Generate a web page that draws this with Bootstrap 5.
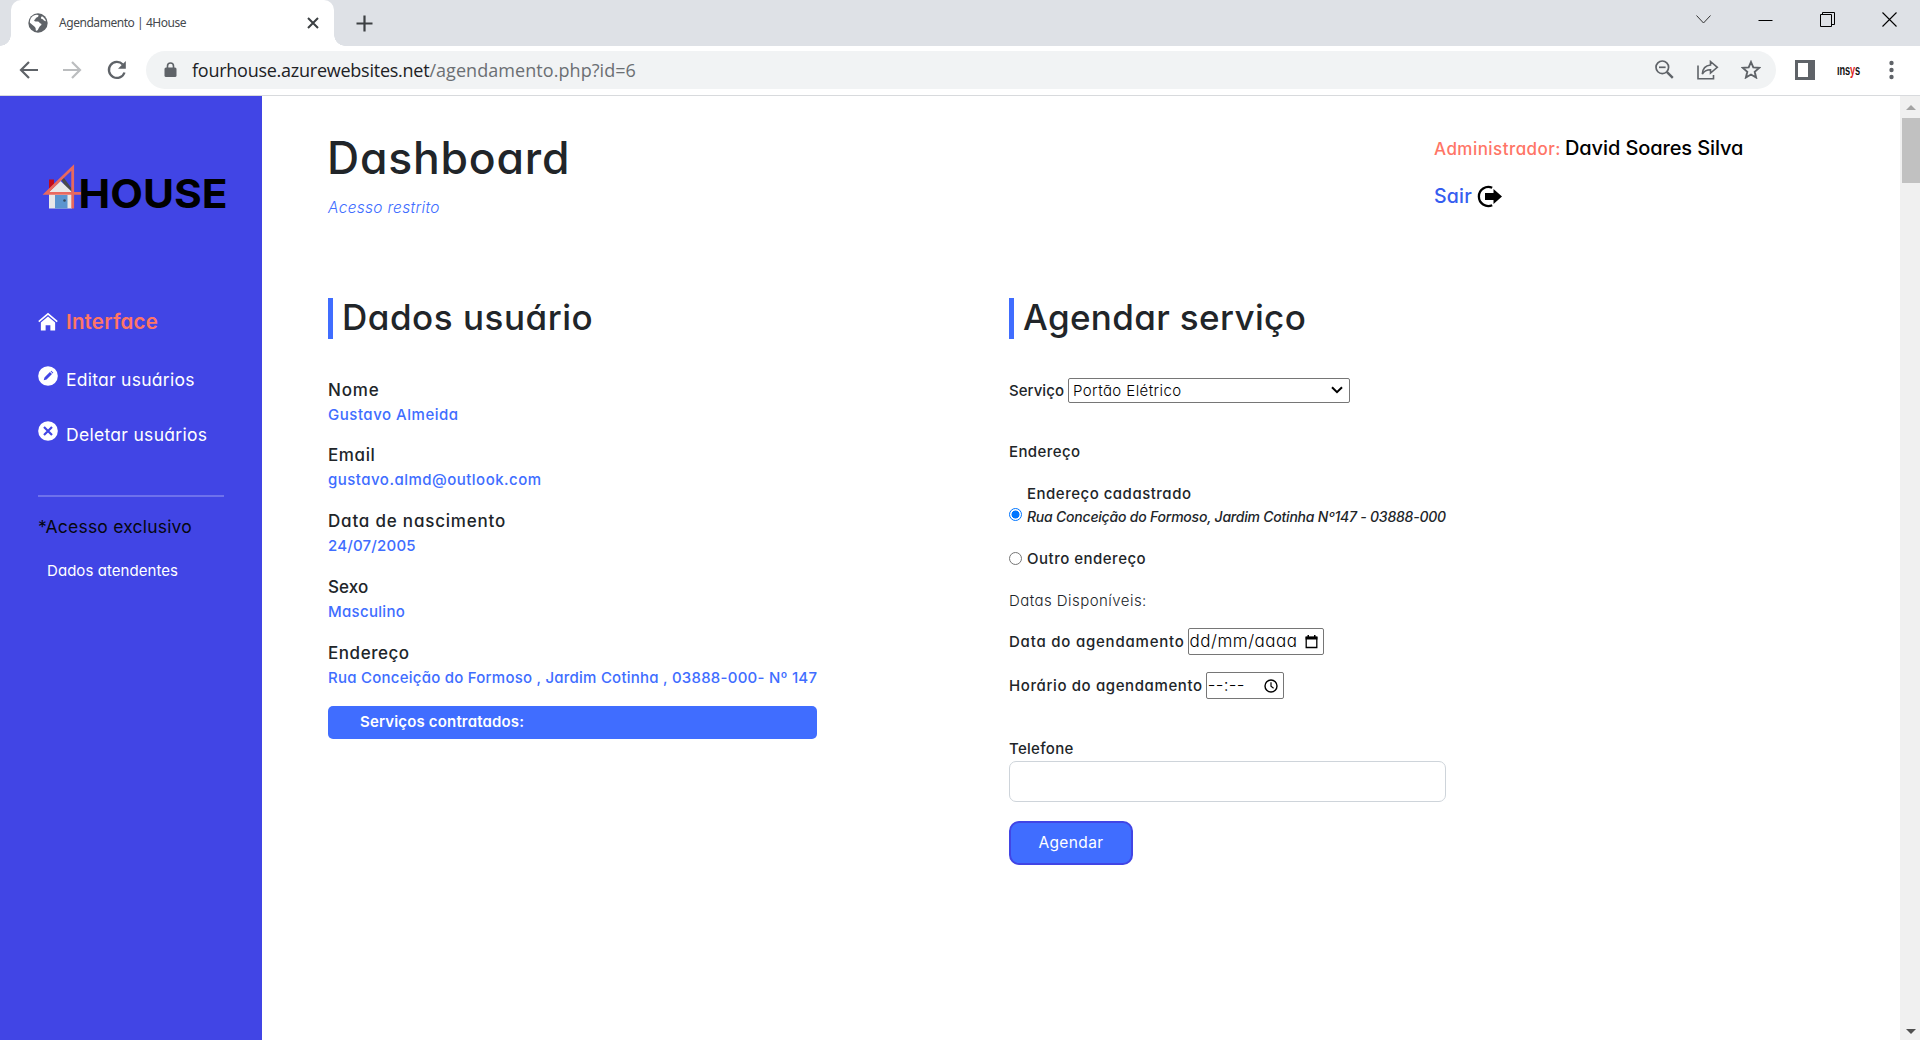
<!DOCTYPE html>
<html lang="pt-BR">
<head>
<meta charset="utf-8">
<title>Agendamento | 4House</title>
<link rel="stylesheet" href="https://cdn.jsdelivr.net/npm/bootstrap@5.3.0/dist/css/bootstrap.min.css">
<style>
:root{--azul:#406dff;--roxo:#4145e5;--coral:#ff7566}
body{width:1920px;height:1040px;overflow:hidden;font-family:Inter,"Liberation Sans",sans-serif;font-feature-settings:"cv11";color:#212529;font-size:15px;font-weight:500;line-height:24px}
body span,body a,h1,h2,label{white-space:nowrap}
svg{display:block;flex:none}
/* browser frame */
.tabstrip{height:46px;background:#dee1e6;padding-left:11px}
.tab-atual{position:relative;width:323px;height:46px;background:#fff;border-radius:10px 10px 0 0;padding:0 15px 0 17px}
.tab-atual::before,.tab-atual::after{content:"";position:absolute;bottom:0;width:11px;height:11px}
.tab-atual::before{left:-11px;background:radial-gradient(circle at 0 0,#dee1e6 10.5px,#fff 11px)}
.tab-atual::after{right:-11px;background:radial-gradient(circle at 100% 0,#dee1e6 10.5px,#fff 11px)}
.tab-titulo{font:400 12px/46px "Noto Sans",sans-serif;letter-spacing:-.45px;color:#45494d;margin-left:11px}
.win{padding-right:23px;gap:47px}
.toolbar{height:50px;background:#fff;border-bottom:1px solid #d8dadd;padding:0 22px 2px 19px}
.omni{width:1630px;height:38px;border-radius:19px;background:#f1f3f4;margin-left:19px;padding:0 15px 0 18px}
.url{font:400 18px/36px "Open Sans",sans-serif;color:#202124;letter-spacing:-.25px;margin-left:15px}
.url i{font-style:normal;color:#6b6f73;letter-spacing:.06px}
.insys{font:700 14px/14px "Liberation Sans",sans-serif;letter-spacing:-.2px;color:#111;width:22px}
.insys span{display:inline-block;transform:scaleX(.66);transform-origin:0 50%}
.insys i{font-style:normal;color:#e02020}
/* sidebar */
.lateral{width:262px;background:var(--roxo);padding:63px 0 0 38px;color:#fff}
.lateral a{color:#fff;text-decoration:none}
.item-menu{height:28px;font-size:17.5px;font-weight:400;line-height:28px;gap:9px}
.traco{width:186px;height:2px;background:#6e71ec;margin:46px 0 17px}
.exclusivo{font-size:17.5px;font-weight:400;line-height:26px;color:#06070f;letter-spacing:.2px}
/* content */
.conteudo{padding:0 0 0 66px;background:#fff}
.topo{height:202px}
h1{font-size:44.5px;line-height:50px;font-weight:500;letter-spacing:.8px;margin:37px 0 15px -1px}
h2{font-size:35px;line-height:38px;font-weight:500;margin:0}
.titulo{height:41px;border-left:5px solid var(--azul);padding-left:9px}
.restrito{font-size:15.5px;line-height:20px;font-weight:300;font-style:italic;color:var(--azul);letter-spacing:.3px}
.coluna-a{width:681px}
.campo{margin-bottom:16.75px;height:49px}
.campo b{display:block;font-size:17px;line-height:25px;font-weight:500}
.campo span{display:block;color:var(--azul);line-height:23px}
.faixa{width:489px;height:33px;background:var(--azul);border-radius:5px;color:#fff;font-weight:600;line-height:31px;padding-left:32px;letter-spacing:.16px}
.caixa{border:1px solid #767676;border-radius:2px;background:#fff;color:#000;font-weight:300;font-size:17px}
.bola{width:13px;height:13px;border:1px solid #767676;border-radius:50%;background:#fff;flex:none}
.bola.sel{border:1.5px solid #0075ff;background:radial-gradient(circle,#0075ff 3.7px,#fff 4.3px)}
.fone{width:437px;height:41px;border:1px solid #ced4da;border-radius:7px;padding:6px 12px}
.btn-agendar{width:124px;height:44px;background:var(--azul);border:2px solid var(--roxo);border-radius:10px;color:#fff;font-size:15.5px;font-weight:400;letter-spacing:.4px;padding:0;line-height:38px;margin-top:19px}
.rolagem{width:20px;background:#f0f0f0;padding:9px 0 6px 2px}
.polegar{width:18px;height:65px;background:#c1c1c1;margin-top:8px}
</style>
</head>
<body class="d-flex flex-column">
<div class="tabstrip d-flex align-items-center">
  <div class="tab-atual d-flex align-items-center">
    <svg width="20" height="20" viewBox="0 0 20 20"><circle cx="10" cy="10" r="9.7" fill="#5f6368"/><path d="M9 1.800c2.800.2 1.300 2.300-.4 2.700-1 .3-1 1.600-2 2.200s-.2 1.800 1 1.800h2.200c1.500 0 1.400 1.700 2.700 1.900 1.500.2 1 1.700.2 2.200-1.200.7-1.700 2.500-2.900 4.300-.8 1.200-2.300 1-2.100-.5.2-1.400-.5-2.400-1.600-3.200L1.900 9.800C1.700 5.500 4.500 1.700 9 1.800zM14 3.200c-1.500 1-1.300 2.700.1 2.700 1 0 1 .9 1.900 1.600.6.500 1.300.8 2 .8-.5-2-2-4.200-4-5.100z" fill="#fff"/></svg>
    <span class="tab-titulo">Agendamento | 4House</span>
    <svg class="ms-auto" width="12" height="12" viewBox="0 0 12 12"><path d="M1 1l10 10M11 1L1 11" stroke="#3c4043" stroke-width="2"/></svg>
  </div>
  <svg style="margin-left:22px" width="17" height="17" viewBox="0 0 17 17"><path d="M8.500.500v16M.5 8.500h16" stroke="#3c4043" stroke-width="2.200"/></svg>
  <div class="win d-flex align-items-center ms-auto h-100 pb-2">
    <svg width="15" height="15" viewBox="0 0 15 15"><path d="M.5 3.500l7 7.500 7-7.500" fill="none" stroke="#333"/></svg>
    <svg width="15" height="15" viewBox="0 0 15 15"><path d="M.5 8.500h14" stroke="#000"/></svg>
    <svg width="15" height="15" viewBox="0 0 15 15"><path d="M.5 2.500h11v12H.5zM2.500 2V.5h12v12h-2.500" fill="none" stroke="#000"/></svg>
    <svg width="15" height="15" viewBox="0 0 15 15"><path d="M.5.500l14 14M14.500.500l-14 14" stroke="#000" stroke-width="1.100"/></svg>
  </div>
</div>
<div class="toolbar d-flex align-items-center">
  <svg width="20" height="20" viewBox="0 0 20 20"><path d="M19 10H2.500M10 2l-8 8 8 8" fill="none" stroke="#5f6368" stroke-width="2.200"/></svg>
  <svg style="margin-left:23px" width="20" height="20" viewBox="0 0 20 20"><path d="M1 10h16.500M10 2l8 8-8 8" fill="none" stroke="#bbbdbf" stroke-width="2.200"/></svg>
  <svg style="margin-left:25px" width="20" height="20" viewBox="0 0 20 20"><path d="M17.500 12.500A8 8 0 1 1 15.800 4.500" fill="none" stroke="#5f6368" stroke-width="2.300"/><path d="M18.800 1v7.800H11z" fill="#5f6368"/></svg>
  <div class="omni d-flex align-items-center">
    <svg width="13" height="16" viewBox="0 0 13 16"><rect x=".5" y="5.500" width="12" height="9.500" rx="1.500" fill="#5f6368"/><path d="M3.500 6V4a3 3 0 0 1 6 0v2" fill="none" stroke="#5f6368" stroke-width="1.600"/></svg>
    <span class="url">fourhouse.azurewebsites.net<i>/agendamento.php?id=6</i></span>
    <svg class="ms-auto" width="19" height="19" viewBox="0 0 19 19"><g fill="none" stroke="#5f6368" stroke-width="1.700"><circle cx="7.300" cy="7.300" r="6.300"/><path d="M4 7.300h6.600"/><path d="M11.800 11.800l6 6" stroke-width="2.400"/></g></svg>
    <svg style="margin-left:23px" width="22" height="20" viewBox="0 0 22 20"><path d="M1 5.500V18.700h15.500V15M13.500 1.500l6.800 5.800-6.800 5.800V9.700c-4 0-6.500 1.200-8.200 4.300C5.600 9 8.500 5.500 13.500 5z" fill="none" stroke="#5f6368" stroke-width="1.600"/></svg>
    <svg style="margin-left:22px" width="20" height="19" viewBox="0 0 20 19"><path d="M10 2l2.300 5.400 5.900.5-4.500 3.900 1.400 5.700-5.100-3-5.100 3 1.400-5.700L1.800 7.900l5.900-.5z" fill="none" stroke="#5f6368" stroke-width="1.900"/></svg>
  </div>
  <svg style="margin-left:19px" width="20" height="20" viewBox="0 0 20 20"><path d="M1.500 1.500h17v17h-17z" fill="#fff" stroke="#5f6368" stroke-width="3"/><path d="M13 1h6v18h-6z" fill="#5f6368"/></svg>
  <div class="insys ms-auto" style="margin-right:26px"><span>ıns<i>y</i>s</span></div>
  <svg width="13" height="20" viewBox="0 0 13 20" fill="#5f6368"><circle cx="6.500" cy="3" r="2.200"/><circle cx="6.500" cy="10" r="2.200"/><circle cx="6.500" cy="17" r="2.200"/></svg>
</div>
<div class="d-flex flex-grow-1" style="min-height:0">
  <aside class="lateral flex-shrink-0">
    <svg width="200" height="56" viewBox="38 159 200 56">
      <path d="M49 179.500h5v12h-5z" fill="#c00a1c"/><path d="M61 179l3-1 8 11v4h-3z" fill="#4a4a4a"/>
      <path d="M49 192L60.500 181l11.500 11v16.500H49z" fill="#e8e8e8"/><path d="M55 195h12.500v13.500H55z" fill="#5b95cf"/><circle cx="64.500" cy="200.500" r="1.300" fill="#34495e"/>
      <path d="M72.700 208.500V167.500L46 193.300h35" fill="none" stroke="#e8695f" stroke-width="2.800"/>
      <text x="78.500" y="208" textLength="149" lengthAdjust="spacingAndGlyphs" font-family="Inter" font-weight="700" font-size="40">HOUSE</text>
    </svg>
    <nav>
      <a href="#" class="item-menu d-flex align-items-center" style="margin-top:93px"><svg width="20" height="20" viewBox="0 0 21 20"><path d="M3 10.500L10.500 4.200 18 10.500V19h-5v-5.500H8V19H3z" fill="#fff"/><path d="M.8 9.600L10.500 1.500l9.700 8.100" fill="none" stroke="#fff" stroke-width="1.700"/></svg><span style="font-size:20.500px;font-weight:600;letter-spacing:.2px;color:#ff7566;margin-left:-1px">Interface</span></a>
      <a href="#" class="item-menu d-flex" style="margin-top:30px"><svg width="20" height="20" viewBox="0 0 21 21"><circle cx="10.500" cy="10.500" r="10.300" fill="#fff"/><path d="M6 15l.8-3 5.700-5.700 2.200 2.200L9 14.200zM13.200 5.600l.7-.7 2.200 2.200-.7.700z" fill="#4145e5"/></svg><span style="letter-spacing:.26px;margin-left:-1px">Editar usuários</span></a>
      <a href="#" class="item-menu d-flex" style="margin-top:27px"><svg width="20" height="20" viewBox="0 0 21 21"><circle cx="10.500" cy="10.500" r="10.300" fill="#fff"/><path d="M6.300 6.300l8.400 8.400M14.700 6.300l-8.400 8.400" stroke="#4145e5" stroke-width="2.300"/></svg><span style="letter-spacing:.3px;margin-left:-1px">Deletar usuários</span></a>
    </nav>
    <div class="traco"></div>
    <div class="exclusivo">*Acesso exclusivo</div>
    <a href="#" class="d-block" style="font-weight:400;line-height:20px;letter-spacing:.06px;margin:21px 0 0 9px">Dados atendentes</a>
  </aside>
  <main class="conteudo flex-grow-1">
    <header class="topo d-flex">
      <div class="coluna-a" style="width:1106px">
        <h1>Dashboard</h1>
        <div class="restrito">Acesso restrito</div>
      </div>
      <div style="padding-top:38px">
        <div class="d-flex" style="line-height:28px"><span style="font-size:17px;line-height:30px;letter-spacing:.46px;color:#ff7566">Administrador:</span><span style="font-size:20px;color:#000;margin-left:4px;letter-spacing:-.1px">David Soares Silva</span></div>
        <a href="#" class="d-flex text-decoration-none" style="font-size:19.500px;line-height:28px;margin-top:18px;color:#355df0;letter-spacing:.2px">Sair<svg style="margin:3px 0 0 4px" width="27" height="23" viewBox="0 0 27 23"><path d="M16.200 2.800A9.500 9.500 0 1 0 16.200 20.200" fill="none" stroke="#000" stroke-width="2.300"/><path d="M9 8h8.500V4l8.500 7.500-8.500 7.500v-4H9z" fill="#000"/></svg></a>
      </div>
    </header>
    <div class="d-flex">
      <section class="coluna-a">
        <div class="titulo"><h2 style="letter-spacing:.53px">Dados usuário</h2></div>
        <div style="height:38.500px"></div>
        <div class="campo"><b style="letter-spacing:.8px">Nome</b><span style="letter-spacing:.52px">Gustavo Almeida</span></div>
        <div class="campo"><b style="letter-spacing:.6px">Email</b><span style="letter-spacing:.48px">gustavo.almd@outlook.com</span></div>
        <div class="campo"><b style="letter-spacing:.8px">Data de nascimento</b><span style="letter-spacing:.2px">24/07/2005</span></div>
        <div class="campo"><b style="letter-spacing:.1px">Sexo</b><span style="letter-spacing:.3px">Masculino</span></div>
        <div class="campo"><b style="letter-spacing:.55px">Endereço</b><span style="letter-spacing:.24px">Rua Conceição do Formoso , Jardim Cotinha , 03888-000- Nº 147</span></div>
        <div class="faixa">Serviços contratados:</div>
      </section>
      <section>
        <div class="titulo"><h2 style="letter-spacing:.36px">Agendar serviço</h2></div>
        <div class="d-flex" style="margin-top:39px;line-height:25px"><label style="letter-spacing:.05px">Serviço</label>
          <div class="caixa d-flex align-items-center" style="margin-left:4px;width:282px;height:25px;font-size:15px;letter-spacing:.42px;padding:0 6px 1px 4px"><span>Portão Elétrico</span><svg class="ms-auto" width="12" height="8" viewBox="0 0 12 8"><path d="M1 1.200l5 5 5-5" fill="none" stroke="#000" stroke-width="2"/></svg></div></div>
        <div style="margin-top:36.500px;letter-spacing:.4px">Endereço</div>
        <div class="d-flex" style="margin-top:18px"><div class="bola sel" style="margin:26px 5px 0 0"></div>
          <div><div style="letter-spacing:.5px">Endereço cadastrado</div><div style="font-size:14px;line-height:20px;margin-top:1.500px;font-style:italic;letter-spacing:-.22px;white-space:nowrap">Rua Conceição do Formoso, Jardim Cotinha Nº147 - 03888-000</div></div></div>
        <div class="d-flex align-items-center" style="margin-top:19.500px"><div class="bola" style="margin-right:5px"></div><label style="letter-spacing:.5px">Outro endereço</label></div>
        <div style="margin-top:18px;font-weight:300;letter-spacing:.45px">Datas Disponíveis:</div>
        <div class="d-flex" style="margin-top:15.500px;line-height:27px"><label style="letter-spacing:.78px">Data do agendamento</label>
          <div class="caixa d-flex align-items-center" style="margin-left:3px;width:136px;height:27px;padding:0 5px 0 1px"><span style="letter-spacing:.5px">dd/mm/aaaa</span><svg class="ms-auto" width="13" height="14" viewBox="0 0 13 14"><path d="M1.200 2.500h10.600v10H1.200z" fill="none" stroke="#000" stroke-width="1.300"/><path d="M.6 1.500h11.800v3H.6zM2.500 0h1.500v2H2.500zM9 0h1.500v2H9z"/></svg></div></div>
        <div class="d-flex" style="margin-top:17px;line-height:27px"><label style="letter-spacing:.61px">Horário do agendamento</label>
          <div class="caixa d-flex align-items-center" style="margin-left:3px;width:78px;height:27px;padding:0 5px 0 1px"><span style="letter-spacing:.3px">--:--</span><svg class="ms-auto" width="14" height="14" viewBox="0 0 14 14"><circle cx="7" cy="7" r="6" fill="none" stroke="#000" stroke-width="1.400"/><path d="M7 3.300V7.300l2.600 1.900" fill="none" stroke="#000" stroke-width="1.200"/></svg></div></div>
        <div style="margin-top:38px;letter-spacing:.3px">Telefone</div>
        <input class="fone d-block" type="text" aria-label="Telefone">
        <button class="btn btn-agendar d-block" type="button">Agendar</button>
      </section>
    </div>
  </main>
  <div class="rolagem d-flex flex-column">
    <svg style="margin-left:4px" width="10" height="5" viewBox="0 0 10 5"><path d="M0 5l5-5 5 5z" fill="#a3a3a3"/></svg>
    <div class="polegar"></div>
    <svg class="mt-auto" style="margin-left:4px" width="10" height="5" viewBox="0 0 10 5"><path d="M0 0l5 5 5-5z" fill="#505050"/></svg>
  </div>
</div>
<script src="https://cdn.jsdelivr.net/npm/bootstrap@5.3.0/dist/js/bootstrap.bundle.min.js"></script>
</body>
</html>
